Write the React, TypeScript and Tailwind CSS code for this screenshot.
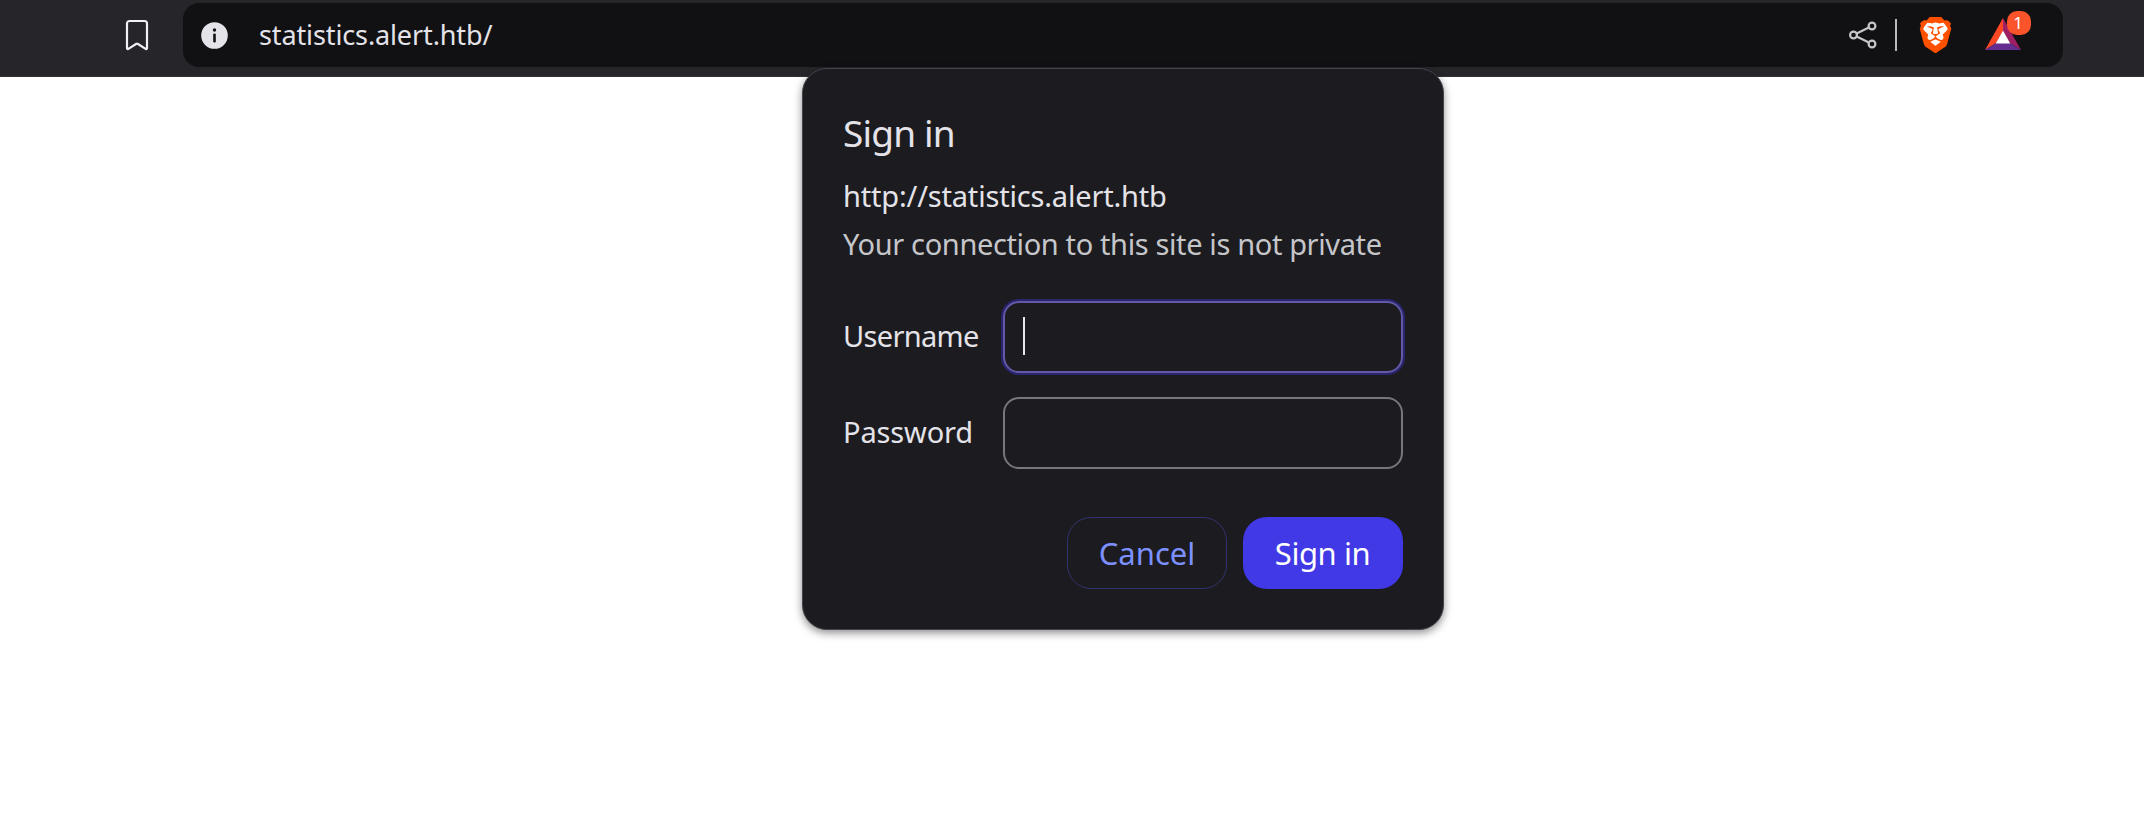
import { SiBrave } from "react-icons/si";

function BookmarkIcon() {
  return (
    <svg className="h-[32px] w-[24px]" viewBox="0 0 24 32" fill="none" stroke="#f1f1f4" strokeWidth="2.2" strokeLinejoin="round">
      <path d="M4.5 2h15a2.500 2.500 0 0 1 2.500 2.500V29.200a.9.9 0 0 1-1.400.7L12.600 24.800a1 1 0 0 0-1.200 0L3.400 29.900A.9.9 0 0 1 2 29.200V4.500A2.500 2.500 0 0 1 4.500 2Z" />
    </svg>
  );
}

function InfoIcon() {
  return (
    <svg className="size-[27px]" viewBox="0 0 27 27">
      <circle cx="13.500" cy="13.500" r="13.300" fill="#e4e3e9" />
      <circle cx="13.500" cy="8" r="1.700" fill="#111113" />
      <rect x="12.200" y="11.500" width="2.600" height="9" rx="1.100" fill="#111113" />
    </svg>
  );
}

function ShareIcon() {
  return (
    <svg className="size-[28px]" viewBox="0 0 28 28" fill="none" stroke="#c5c6ca" strokeWidth="2.2">
      <circle cx="4.500" cy="14" r="3.400" />
      <circle cx="23" cy="5" r="3.400" />
      <circle cx="23" cy="23" r="3.400" />
      <path d="M7.600 12.400 19.900 6.500M7.600 15.600l12.300 5.900" />
    </svg>
  );
}

function BraveIcon() {
  return (
    <div className="grid h-9 w-[37px]">
      <svg className="col-start-1 row-start-1 h-9 w-[37px]" viewBox="0 0 24 24" preserveAspectRatio="none">
        <path d="M5 3h14l2 5-3 11-6 3-6-3L3 8Z" fill="#fff" />
      </svg>
      <SiBrave className="col-start-1 row-start-1 h-9 w-[37px] text-[#ff5000]" preserveAspectRatio="none" />
    </div>
  );
}

function RewardsIcon() {
  return (
    <svg className="h-[32px] w-[36px]" viewBox="0 0 36 32">
      <path d="M18 0 0 32l11-7 7-12Z" fill="#ff4724" />
      <path d="M18 0l18 32-11-7-7-12Z" fill="#9e1f63" />
      <path d="M0 32h36l-11-7H11Z" fill="#662d91" />
      <path d="M18 12.500 25.300 25.500H10.700Z" fill="#fff" />
    </svg>
  );
}

function Toolbar() {
  return (
    <header className="flex h-[77px] items-start border-b border-[#312f37] bg-[#26252a] pt-[3px]">
      <div className="ml-[125px] flex h-16 w-6 items-center">
        <BookmarkIcon />
      </div>
      <div className="ml-[34px] flex h-16 w-[1880px] items-center rounded-[16px] bg-[#111113] pl-[18px]">
        <InfoIcon />
        <span className="ml-[31px] text-[27px] leading-[36px] tracking-[-0.120px] text-[#e4e3e9]">
          statistics.alert.htb/
        </span>
        <div className="ml-auto flex items-center">
          <ShareIcon />
          <div className="ml-[18px] h-8 w-[2px] bg-[#b9babf]" />
          <div className="ml-[20px]">
            <BraveIcon />
          </div>
          <div className="relative mr-[42px] ml-[31px] pb-[2px]">
            <RewardsIcon />
            <span className="absolute -top-[7px] left-[22px] flex size-6 items-center justify-center rounded-[10px] bg-[#fb542b] pr-[2px] text-[17px] leading-6 text-white">
              1
            </span>
          </div>
        </div>
      </div>
    </header>
  );
}

function SignInDialog() {
  return (
    <div
      role="dialog"
      className="absolute top-[68px] left-[802px] flex h-[562px] w-[642px] flex-col rounded-[25px] border border-[#45444c] bg-[#1c1b1f] p-10 shadow-[0_3px_8px_rgba(0,0,0,0.45)]"
    >
      <h1 className="pt-px text-[37px] leading-[46px] tracking-[-0.800px] text-[#e4e3e9]">Sign in</h1>
      <p className="mt-4 text-[29px] leading-[48px] tracking-[-0.180px] text-[#e4e3e9]">http://statistics.alert.htb</p>
      <p className="text-[29px] leading-[48px] tracking-[-0.370px] whitespace-nowrap text-[#c5c6ca]">
        Your connection to this site is not private
      </p>
      <div className="mt-[33px] flex flex-col gap-6 text-[29px] text-[#e4e3e9]">
        <div className="flex h-[72px] items-center">
          <span className="w-40 pb-[2px] tracking-[-0.680px]">Username</span>
          <div className="flex h-[72px] w-[400px] items-center rounded-[16px] border-2 border-[#6259a8] pl-[18px] shadow-[0_0_0_2px_#29256f]">
            <div className="mb-[2px] h-[38px] w-[2px] bg-[#e8e7ec]" />
          </div>
        </div>
        <div className="flex h-[72px] items-center">
          <span className="w-40 pb-[2px] tracking-[-0.150px]">Password</span>
          <div className="h-[72px] w-[400px] rounded-[16px] border-2 border-[#77767b]" />
        </div>
      </div>
      <div className="mt-12 flex justify-end gap-4 text-[31px]">
        <button className="h-[72px] w-40 rounded-[24px] border border-[#31326f] text-[#7c91ff]">
          Cancel
        </button>
        <button className="h-[72px] w-40 rounded-[24px] bg-[#4139e6] pr-px tracking-[-0.450px] whitespace-nowrap text-white">
          Sign in
        </button>
      </div>
    </div>
  );
}

export default function App() {
  return (
    <div className="relative h-[834px] w-[2144px] overflow-hidden bg-white font-['Noto_Sans',sans-serif] font-[370]">
      <Toolbar />
      <SignInDialog />
    </div>
  );
}
